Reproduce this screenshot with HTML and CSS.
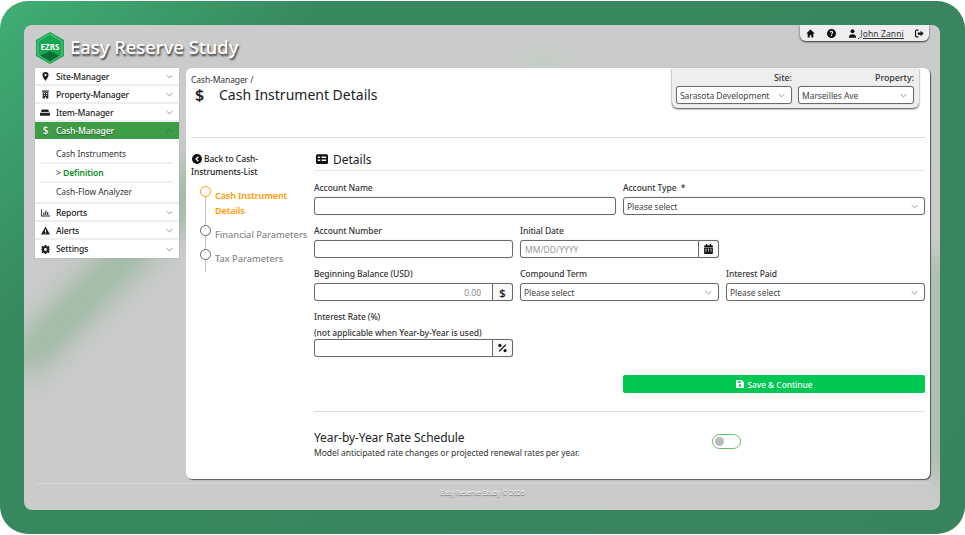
FILE: index.html
```html
<!DOCTYPE html>
<html lang="en">
<head>
    <meta charset="UTF-8">
    <meta name="viewport" content="width=device-width, initial-scale=1.0">
    <title>Cash Instrument Details</title>
    <link rel="stylesheet" href="styles.css">
</head>
<body>
<div class="frame">
<div class="panel">

    <header class="top">
        <div class="brand">
            <svg class="logo" viewBox="0 0 28 32"><polygon points="14,0 28,8 28,24 14,32 0,24 0,8" fill="#16a650"/><polygon points="14,19 24,24 14,30 4,24" fill="#0b6e36"/><polygon points="14,2 26,9 26,23 14,30 2,23 2,9" fill="none" stroke="#7fdca3" stroke-width=".7"/></svg>
            <span class="logo-text">EZRS</span>
            <span class="brand-name">Easy Reserve Study</span>
        </div>
        <nav class="toolbar">
            <svg class="tool-icon" viewBox="0 0 16 16"><path d="M8 1 .5 8H3v7h3.500v-4h3v4H13V8h2.500z"/></svg>
            <svg class="tool-icon" viewBox="0 0 16 16"><path fill-rule="evenodd" d="M8 0a8 8 0 1 0 0 16A8 8 0 0 0 8 0zM7 10.500h2v2H7zM5 6a3 3 0 1 1 4.500 2.600c-.4.300-.5.500-.5 1H7c0-1.200.4-1.800 1.200-2.200.5-.3.800-.7.800-1.400a1 1 0 0 0-2 0z"/></svg>
            <a class="user" href="#"><svg class="tool-icon" viewBox="0 0 16 16"><circle cx="8" cy="4" r="3.500"/><path d="M1.500 15.500c0-4 2.500-6 6.500-6s6.500 2 6.500 6z"/></svg><span>&nbsp;John Zanni</span></a>
            <svg class="tool-icon logout" viewBox="0 0 16 16"><path d="M6 2H3a2 2 0 0 0-2 2v8a2 2 0 0 0 2 2h3" fill="none" stroke="#111" stroke-width="2"/><path d="M10 3l5.500 5-5.500 5v-3H5V6h5z"/></svg>
        </nav>
    </header>

    <div class="content">
        <aside class="sidebar">
            <a class="menu-item"><svg class="menu-icon" viewBox="0 0 16 16"><path fill-rule="evenodd" d="M8 0a5.500 5.500 0 0 0-5.500 5.500C2.500 9 8 16 8 16s5.500-7 5.500-10.500A5.500 5.500 0 0 0 8 0zm0 3.500a2 2 0 1 1 0 4 2 2 0 0 1 0-4z"/></svg><span>Site-Manager</span><svg class="chev" viewBox="0 0 10 6"><polyline points="1,1 5,5 9,1"/></svg></a>
            <a class="menu-item"><svg class="menu-icon" viewBox="0 0 16 16"><path fill-rule="evenodd" d="M2 1h12v2H2zM3 4h10v11H9v-3H7v3H3zm2 1.500V7h2V5.500zm4 0V7h2V5.500zM5 8.500V10h2V8.500zm4 0V10h2V8.500z"/></svg><span>Property-Manager</span><svg class="chev" viewBox="0 0 10 6"><polyline points="1,1 5,5 9,1"/></svg></a>
            <a class="menu-item"><svg class="menu-icon wide" viewBox="0 0 16 12"><path d="M4 1h8a2 2 0 0 1 2 2v2H2V3a2 2 0 0 1 2-2zM0 6.500h16V10a1 1 0 0 1-1 1H1a1 1 0 0 1-1-1z"/></svg><span>Item-Manager</span><svg class="chev" viewBox="0 0 10 6"><polyline points="1,1 5,5 9,1"/></svg></a>
            <a class="menu-item active"><span class="menu-icon dollar">$</span><span>Cash-Manager</span><svg class="chev" viewBox="0 0 10 6"><polyline points="1,5 5,1 9,5"/></svg></a>
            <div class="submenu">
                <a class="sub-item">Cash Instruments</a>
                <a class="sub-item">&gt; <b>Definition</b></a>
                <a class="sub-item">Cash-Flow Analyzer</a>
            </div>
            <a class="menu-item"><svg class="menu-icon" viewBox="0 0 16 16"><path d="M0 2h1.500v11.500H16V15H0z"/><path d="M4 8h2v4.500H4zM7.500 5h2v7.500h-2zM11 7h2v5.500h-2z"/></svg><span>Reports</span><svg class="chev" viewBox="0 0 10 6"><polyline points="1,1 5,5 9,1"/></svg></a>
            <a class="menu-item"><svg class="menu-icon" viewBox="0 0 16 16"><path fill-rule="evenodd" d="M8 1 0 15h16zM7 6h2v5H7zm0 6h2v1.500H7z"/></svg><span>Alerts</span><svg class="chev" viewBox="0 0 10 6"><polyline points="1,1 5,5 9,1"/></svg></a>
            <a class="menu-item"><svg class="menu-icon" viewBox="0 0 16 16"><path fill-rule="evenodd" d="M6.500 0h3l.4 2.200 1.500.6 1.900-1.300 2 2.200L14 5.600l.6 1.400 1.400.5v1l-1.400.5-.6 1.400 1.300 1.900-2 2.200-1.900-1.300-1.500.6L9.500 16h-3l-.4-2.200-1.500-.6-1.900 1.300-2-2.200L2 10.400 1.400 9 0 8.500v-1L1.400 7 2 5.600.7 3.700l2-2.200 1.900 1.300 1.500-.6zM8 5.500a2.500 2.500 0 1 0 0 5 2.500 2.500 0 0 0 0-5z"/></svg><span>Settings</span><svg class="chev" viewBox="0 0 10 6"><polyline points="1,1 5,5 9,1"/></svg></a>
        </aside>

        <main class="card">
            <div class="card-head">
                <div>
                    <div class="crumb">Cash-Manager /</div>
                    <h1 class="page-title"><span class="title-icon">$</span>Cash Instrument Details</h1>
                </div>
                <div class="context">
                    <label class="context-field">Site:
                        <div class="select-box">Sarasota Development<svg class="chev" viewBox="0 0 10 6"><polyline points="1,1 5,5 9,1"/></svg></div>
                    </label>
                    <label class="context-field">Property:
                        <div class="select-box">Marseilles Ave<svg class="chev" viewBox="0 0 10 6"><polyline points="1,1 5,5 9,1"/></svg></div>
                    </label>
                </div>
            </div>

            <div class="card-body">
                <div class="steps-col">
                    <a class="back-link"><svg class="back-icon" viewBox="0 0 16 16"><path fill-rule="evenodd" d="M8 0a8 8 0 1 1 0 16A8 8 0 0 1 8 0zm1.500 3.500L5 8l4.500 4.500 1.500-1.500-3-3 3-3z"/></svg>Back to Cash-Instruments-List</a>
                    <ul class="steps">
                        <li class="step current">Cash Instrument Details</li>
                        <li class="step">Financial Parameters</li>
                        <li class="step">Tax Parameters</li>
                    </ul>
                </div>

                <div class="form-col">
                    <h2 class="section-title"><svg class="section-icon" viewBox="0 0 16 13"><path fill-rule="evenodd" d="M2 0h12a2 2 0 0 1 2 2v9a2 2 0 0 1-2 2H2a2 2 0 0 1-2-2V2a2 2 0 0 1 2-2zm.500 3v2h3V3zm5 0v2h6V3zm-5 4v2h3V7zm5 0v2h6V7z"/></svg>Details</h2>

                    <div class="form-grid">
                        <div class="field span-3"><label>Account Name</label><input class="input" type="text"></div>
                        <div class="field span-3"><label>Account Type &nbsp;*</label><div class="select-box">Please select<svg class="chev" viewBox="0 0 10 6"><polyline points="1,1 5,5 9,1"/></svg></div></div>

                        <div class="field span-2"><label>Account Number</label><input class="input" type="text"></div>
                        <div class="field span-2"><label>Initial Date</label>
                            <div class="input-group"><input class="input" type="text" placeholder="MM/DD/YYYY"><span class="addon"><svg class="addon-icon" viewBox="0 0 14 16"><path fill-rule="evenodd" d="M3 0h2v2h4V0h2v2h1.500A1.500 1.500 0 0 1 14 3.500V5H0V3.500A1.500 1.500 0 0 1 1.500 2H3zM0 6h14v8.500a1.500 1.500 0 0 1-1.500 1.500h-11A1.500 1.500 0 0 1 0 14.500zm2 1.500V9h2V7.500zm4 0V9h2V7.500zm4 0V9h2V7.500zm-8 3V12h2v-1.500zm4 0V12h2v-1.500zm4 0V12h2v-1.500z"/></svg></span></div>
                        </div>
                        <div class="field span-2"></div>

                        <div class="field span-2"><label>Beginning Balance (USD)</label>
                            <div class="input-group"><input class="input amount" type="text" value="0.00"><span class="addon addon-text">$</span></div>
                        </div>
                        <div class="field span-2"><label>Compound Term</label><div class="select-box">Please select<svg class="chev" viewBox="0 0 10 6"><polyline points="1,1 5,5 9,1"/></svg></div></div>
                        <div class="field span-2"><label>Interest Paid</label><div class="select-box">Please select<svg class="chev" viewBox="0 0 10 6"><polyline points="1,1 5,5 9,1"/></svg></div></div>

                        <div class="field span-2"><label>Interest Rate (%)</label><label>(not applicable when Year-by-Year is used)</label>
                            <div class="input-group"><input class="input" type="text"><span class="addon"><svg class="addon-icon" viewBox="0 0 14 14"><circle cx="3" cy="3" r="2.500"/><circle cx="11" cy="11" r="2.500"/><path d="M11.500 1 13 2.500 2.500 13 1 11.500z"/></svg></span></div>
                        </div>
                    </div>

                    <div class="save-row">
                        <button class="save-btn" type="button"><svg class="save-icon" viewBox="0 0 14 14"><path fill-rule="evenodd" d="M1.500 0H10l4 4v8.500a1.500 1.500 0 0 1-1.500 1.500h-11A1.500 1.500 0 0 1 0 12.500v-11A1.500 1.500 0 0 1 1.500 0zM3 2v3h6V2zm4 5.500a2.200 2.200 0 1 0 0 4.400 2.200 2.200 0 0 0 0-4.400z"/></svg>Save &amp; Continue</button>
                    </div>

                    <div class="schedule">
                        <div class="schedule-text">
                            <h3 class="schedule-title">Year-by-Year Rate Schedule</h3>
                            <p class="schedule-desc">Model anticipated rate changes or projected renewal rates per year.</p>
                        </div>
                        <span class="toggle"><span class="toggle-knob"></span></span>
                    </div>
                </div>
            </div>
        </main>
    </div>

    <footer class="footer">Easy Reserve Study &copy; 2026</footer>
</div>
</div>
</body>
</html>
```

FILE: styles.css
```css
* {
    box-sizing: border-box;
}

html, body {
    margin: 0;
    padding: 0;
    background-color: #fff;
}

body {
    font-family: 'Noto Sans', sans-serif;
    font-size: 9px;
    color: #222;
    width: 965px;
    height: 535px;
    overflow: hidden;
}

a {
    color: inherit;
    text-decoration: none;
}

.frame {
    width: 965px;
    height: 533px;
    margin-top: 1px;
    padding: 24px 24px 23px 24px;
    border-radius: 28px;
    background: linear-gradient(135deg, #3fae75 0%, #37895f 22%, #37835e 100%);
}

.panel {
    position: relative;
    overflow: hidden;
    height: 485px;
    width: 916px;
    padding: 0 10px 0 11px;
    border-radius: 8px;
    display: flex;
    flex-direction: column;
    background-color: #cbcbcb;
    background-image: radial-gradient(ellipse 40px 26px at 520px 36px, rgba(190, 208, 192, .6), transparent);
}

/* blurred background streaks, they only show in the gaps */
.panel::before {
    content: "";
    position: absolute;
    left: -50px;
    top: 222px;
    width: 290px;
    height: 32px;
    background-color: #93b699;
    filter: blur(16px);
    transform: rotate(-46deg);
}

.panel::after {
    content: "";
    position: absolute;
    right: -14px;
    top: 230px;
    width: 24px;
    height: 220px;
    background-color: #9cbb9f;
    filter: blur(12px);
}

.top, .content, .footer {
    position: relative;
    z-index: 1;
}

/* top bar */
.top {
    height: 43px;
    flex: none;
    display: flex;
    justify-content: space-between;
    align-items: flex-start;
}

.brand {
    position: relative;
    display: flex;
    align-items: center;
    margin-top: 7px;
    margin-left: 1px;
}

.logo {
    width: 28px;
    height: 32px;
}

.logo-text {
    position: absolute;
    left: 2px;
    top: 10px;
    width: 24px;
    text-align: center;
    color: #fff;
    font-size: 8px;
    font-weight: 700;
    line-height: 10px;
}

.brand-name {
    margin-left: 6px;
    margin-top: -3px;
    color: #fff;
    font-size: 18.400px;
    font-weight: 500;
    text-shadow: 1px 2px 2px #333;
}

.toolbar {
    width: 129px;
    height: 16px;
    margin-right: 1px;
    padding: 0 5px 0 6px;
    display: flex;
    align-items: center;
    background-color: #eee;
    border-radius: 0 0 6px 6px;
    box-shadow: 0 1px 2px #333;
}

.tool-icon {
    width: 9px;
    height: 9px;
    fill: #111;
    flex: none;
}

.tool-icon + .tool-icon {
    margin-left: 12px;
}

.user {
    display: flex;
    align-items: center;
    margin-left: 12px;
    font-size: 8.500px;
    letter-spacing: .1px;
    color: #333;
    text-decoration: underline;
}

.user span {
    padding-left: 1px;
}

.logout {
    margin-left: auto;
}

/* layout */
.content {
    display: flex;
    gap: 7px;
    align-items: flex-start;
}

.sidebar {
    width: 144px;
    flex: none;
    background-color: #fff;
    box-shadow: 0 0 1px rgba(0, 0, 0, .2);
}

.menu-item {
    height: 18px;
    padding: 1px 6px 0;
    display: flex;
    align-items: center;
    font-size: 8.600px;
    letter-spacing: -.15px;
    font-weight: 500;
    color: #222;
    border-bottom: 2px solid #eee;
}

.menu-item:last-child {
    border-bottom: 0;
    padding-top: 0;
}

.menu-icon {
    width: 9px;
    height: 9px;
    margin-right: 6px;
    fill: #222;
    flex: none;
}

.menu-icon.wide {
    width: 10px;
    margin-left: -1px;
    margin-right: 6px;
}

.dollar {
    font-size: 10px;
    line-height: 9px;
    text-align: center;
}

.chev {
    width: 7px;
    height: 5px;
    margin-left: auto;
    flex: none;
    fill: none;
    stroke: #777;
    stroke-width: 1.100;
}

.menu-item.active {
    height: 17px;
    padding-top: 0;
    background-color: #3f9c46;
    color: #fff;
    border-bottom: 0;
    text-shadow: 0 1px 1px rgba(0, 0, 0, .4);
}

.menu-item.active .chev {
    stroke: #2b6e30;
}

.submenu {
    height: 65px;
    padding: 6px 6px 0 6px;
    border-bottom: 2px solid #eee;
}

.sub-item {
    display: block;
    height: 19px;
    padding-left: 15px;
    line-height: 18px;
    font-size: 8.500px;
    letter-spacing: -.05px;
    color: #333;
    border-bottom: 2px solid #f0f0f0;
}

.sub-item:last-child {
    border-bottom: 0;
}

.sub-item b {
    color: #0a8a1c;
    font-weight: 600;
}

.card {
    width: 744px;
    height: 411px;
    flex: none;
    background-color: #fff;
    border-radius: 6px;
    box-shadow: 1px 1px 1px #555;
}

.card-head {
    height: 70px;
    margin: 0 5px;
    display: flex;
    justify-content: space-between;
    align-items: flex-start;
    border-bottom: 1px solid #ddd;
}

.crumb {
    margin-top: 6px;
    font-size: 8.500px;
    letter-spacing: -.1px;
    line-height: 12px;
    color: #333;
}

.page-title {
    margin: 0;
    display: flex;
    align-items: center;
    font-size: 14px;
    font-weight: 400;
    line-height: 18px;
    color: #222;
}

.title-icon {
    width: 28px;
    padding-left: 4px;
    font-size: 16px;
    font-weight: 600;
}

.context {
    width: 247px;
    height: 40px;
    margin-right: 6px;
    padding: 3px 5px 0 4px;
    display: flex;
    gap: 6px;
    background-color: #eee;
    border-radius: 0 0 6px 6px;
    box-shadow: 0 1px 2px #444;
}

.context-field {
    flex: 1;
    display: block;
    text-align: right;
    font-size: 8.800px;
    line-height: 15px;
    font-weight: 500;
    color: #333;
}

.select-box {
    height: 18px;
    padding: 0 6px 0 3px;
    display: flex;
    align-items: center;
    text-align: left;
    font-size: 8.500px;
    letter-spacing: -.05px;
    font-weight: 400;
    color: #444;
    background-color: #fff;
    border: 1px solid #6a6a6a;
    border-radius: 3px;
    box-shadow: 0 0 1px rgba(0, 0, 0, .3);
}

.card-body {
    display: flex;
    padding: 14px 5px 0 5px;
}

/* stepper */
.steps-col {
    width: 123px;
    flex: none;
}

.back-link {
    display: block;
    width: 86px;
    font-size: 8.500px;
    letter-spacing: -.05px;
    line-height: 13px;
    font-weight: 500;
    color: #222;
}

.back-icon {
    width: 10px;
    height: 10px;
    margin: 0 2px 0 1px;
    fill: #111;
    vertical-align: -2px;
}

.steps {
    list-style: none;
    margin: 7px 0 0 9px;
    padding: 0;
}

.step {
    position: relative;
    padding: 3px 0 6px 15px;
    font-size: 9.300px;
    letter-spacing: -.05px;
    line-height: 15px;
    font-weight: 500;
    color: #888;
    white-space: nowrap;
}

.step::before {
    content: "";
    position: absolute;
    left: 5px;
    top: 4px;
    bottom: -4px;
    width: 1px;
    background-color: #b9c6cc;
}

.step:last-child::before {
    bottom: 0;
}

.step::after {
    content: "";
    position: absolute;
    left: 0;
    top: 1px;
    width: 11px;
    height: 11px;
    box-sizing: border-box;
    border: 1.500px solid #666;
    border-radius: 50%;
    background-color: #fff;
}

.step.current {
    width: 100px;
    white-space: normal;
    color: #f90;
    font-weight: 600;
    font-size: 9px;
    letter-spacing: -.1px;
}

.step.current::after {
    border-color: #f90;
}

/* form */
.form-col {
    width: 611px;
    flex: none;
}

.section-title {
    margin: 0 0 8px;
    height: 19px;
    display: flex;
    align-items: center;
    font-size: 12px;
    font-weight: 400;
    color: #222;
    border-bottom: 1px solid #e3e3e3;
    padding: 0 0 4px 2px;
}

.section-icon {
    width: 12px;
    height: 10px;
    margin-right: 5px;
    fill: #111;
}

.form-grid {
    display: grid;
    grid-template-columns: repeat(6, 96px);
    column-gap: 7px;
    row-gap: 7px;
}

.span-3 {
    grid-column: span 3;
}

.span-2 {
    grid-column: span 2;
}

.field label {
    display: block;
    font-size: 8.500px;
    letter-spacing: -.08px;
    line-height: 18px;
    font-weight: 500;
    color: #333;
}

.field label + label {
    line-height: 13px;
}

.input {
    display: block;
    width: 100%;
    height: 18px;
    padding: 0 4px;
    font-family: inherit;
    font-size: 8.500px;
    color: #888;
    background-color: #fff;
    border: 1px solid #6a6a6a;
    border-radius: 3px;
    box-shadow: 0 0 1px rgba(0, 0, 0, .3);
    outline: none;
}

.input::placeholder {
    color: #999;
}

.input.amount {
    text-align: right;
    padding-right: 11px;
}

.input-group {
    display: flex;
}

.input-group .input {
    flex: 1;
    min-width: 0;
    border-radius: 3px 0 0 3px;
}

.addon {
    width: 20px;
    height: 18px;
    flex: none;
    display: flex;
    align-items: center;
    justify-content: center;
    background-color: #f8f9fa;
    border: 1px solid #6a6a6a;
    border-left: 0;
    border-radius: 0 3px 3px 0;
    box-shadow: 0 0 1px rgba(0, 0, 0, .3);
}

.addon-text {
    font-size: 11px;
    font-weight: 600;
    color: #222;
}

.addon-icon {
    width: 9px;
    height: 10px;
    fill: #111;
}

.save-row {
    margin-top: 18px;
    padding-bottom: 18px;
    display: flex;
    justify-content: flex-end;
    border-bottom: 1px solid #ddd;
}

.save-btn {
    width: 302px;
    height: 18px;
    display: flex;
    align-items: center;
    justify-content: center;
    font-family: inherit;
    font-size: 8.300px;
    font-weight: 500;
    color: #fff;
    background-color: #00c853;
    border: none;
    border-radius: 2px;
    cursor: pointer;
}

.save-icon {
    width: 8px;
    height: 8px;
    margin-right: 4px;
    fill: #fff;
}

.schedule {
    display: flex;
    padding-top: 18px;
}

.schedule-text {
    width: 398px;
}

.schedule-title {
    margin: 0;
    font-size: 12px;
    letter-spacing: -.1px;
    font-weight: 400;
    line-height: 16px;
    color: #222;
}

.schedule-desc {
    margin: 0;
    font-size: 8.600px;
    letter-spacing: -.1px;
    line-height: 14px;
    color: #333;
}

.toggle {
    width: 29px;
    height: 15px;
    margin-top: 4px;
    padding: 2px;
    border: 1px solid #5fbf63;
    border-radius: 8px;
    background-color: #fff;
}

.toggle-knob {
    display: block;
    width: 9px;
    height: 9px;
    border-radius: 50%;
    background-color: #bbb;
}

.footer {
    height: 26px;
    margin-top: 4px;
    padding-top: 3px;
    text-align: center;
    font-size: 6.700px;
    line-height: 12px;
    color: #fff;
    border-top: 1px solid #d6d6d6;
    text-shadow: 0 1px 1px #555;
}
```
